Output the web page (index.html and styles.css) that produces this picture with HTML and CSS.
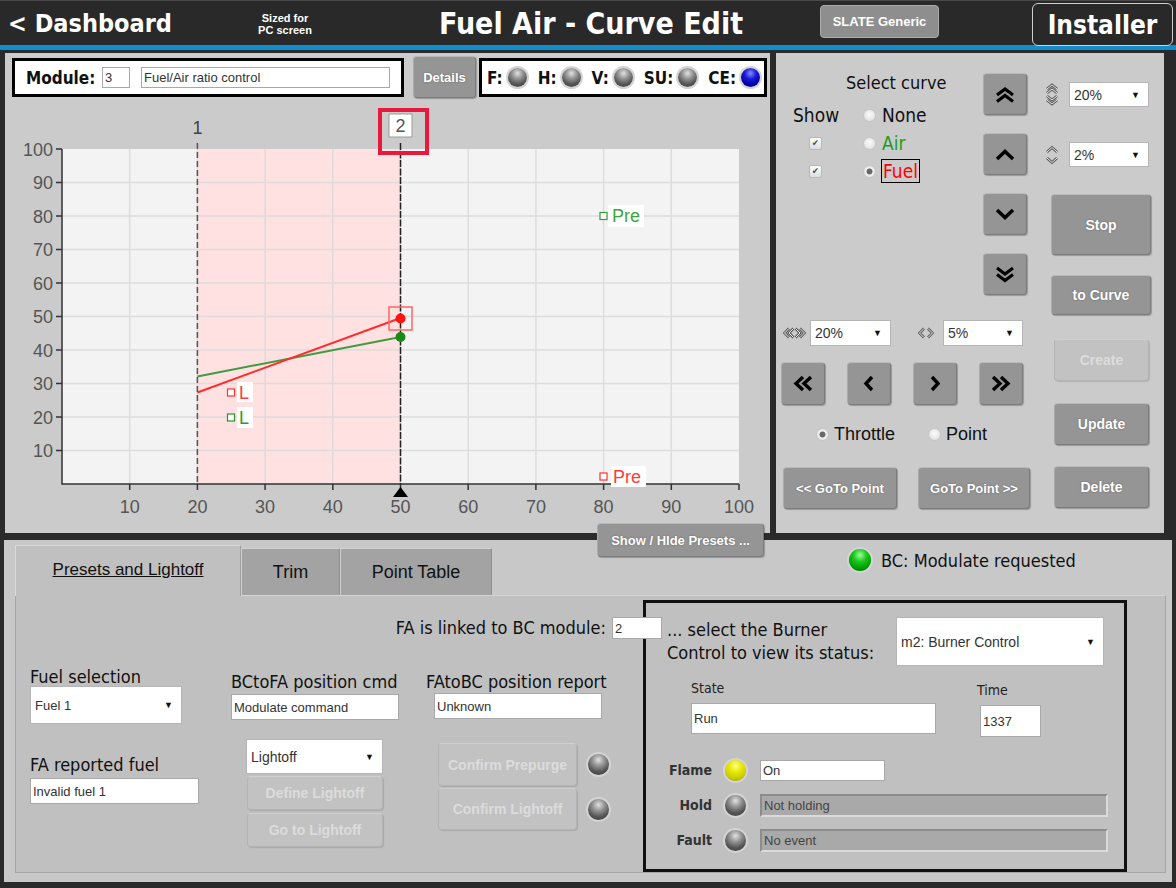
FILE: index.html
```html
<!DOCTYPE html>
<html lang="en">
<head>
<meta charset="utf-8">
<title>Fuel Air - Curve Edit</title>
<link rel="stylesheet" href="styles.css">
</head>
<body>
<header class="topbar">
  <div class="back">&lt; Dashboard</div>
  <div class="sized">Sized for<br>PC screen</div>
  <div></div>
  <h1 class="title">Fuel Air - Curve Edit</h1>
  <div></div>
  <div class="slate">SLATE Generic</div>
  <div></div>
  <div class="installer">Installer</div>
</header>
<div class="blueline"></div>
<main class="main">
  <section class="chart-panel">
    <div class="module-row">
      <div class="module-box">
        <span class="mod-label">Module:</span>
        <span class="inp mod-num">3</span>
        <span class="inp mod-name">Fuel/Air ratio control</span>
      </div>
      <div class="btn details">Details</div>
      <div class="status-box">
        <span class="st-group"><span class="st-label">F:</span><span class="led"></span></span>
        <span class="st-group"><span class="st-label">H:</span><span class="led"></span></span>
        <span class="st-group"><span class="st-label">V:</span><span class="led"></span></span>
        <span class="st-group"><span class="st-label">SU:</span><span class="led"></span></span>
        <span class="st-group"><span class="st-label">CE:</span><span class="led blue"></span></span>
      </div>
    </div>
    <svg class="chart" width="765" height="433" viewBox="5 100 765 433" xmlns="http://www.w3.org/2000/svg">
      <rect x="62" y="149" width="677" height="335" fill="#f3f3f3"/>
      <rect x="197.4" y="149" width="203.1" height="335" fill="#ffe1e1"/>
      <g stroke="#dadada" stroke-width="1.5" opacity="0.85">
        <path d="M129.7 149V484M197.4 149V484M265.1 149V484M332.8 149V484M400.5 149V484M468.2 149V484M535.9 149V484M603.6 149V484M671.3 149V484"/>
        <path d="M62 450.5H739M62 417H739M62 383.5H739M62 350H739M62 316.5H739M62 283H739M62 249.5H739M62 216H739M62 182.5H739"/>
      </g>
      <g stroke="#333" stroke-width="1.5" fill="none">
        <path d="M62 149V484H739"/>
        <path d="M56 149H62M56 182.5H62M56 216H62M56 249.5H62M56 283H62M56 316.5H62M56 350H62M56 383.5H62M56 417H62M56 450.5H62"/>
        <path d="M129.7 484V490M197.4 484V490M265.1 484V490M332.8 484V490M400.5 484V490M468.2 484V490M535.9 484V490M603.6 484V490M671.3 484V490M739 484V490"/>
      </g>
      <g font-family="Liberation Sans, Arial, sans-serif" font-size="18" fill="#555" text-anchor="end">
        <text x="53" y="155.5">100</text>
        <text x="53" y="189">90</text>
        <text x="53" y="222.5">80</text>
        <text x="53" y="256">70</text>
        <text x="53" y="289.5">60</text>
        <text x="53" y="323">50</text>
        <text x="53" y="356.5">40</text>
        <text x="53" y="390">30</text>
        <text x="53" y="423.5">20</text>
        <text x="53" y="457">10</text>
      </g>
      <g font-family="Liberation Sans, Arial, sans-serif" font-size="18" fill="#555" text-anchor="middle">
        <text x="129.7" y="513">10</text>
        <text x="197.4" y="513">20</text>
        <text x="265.1" y="513">30</text>
        <text x="332.8" y="513">40</text>
        <text x="400.5" y="513">50</text>
        <text x="468.2" y="513">60</text>
        <text x="535.9" y="513">70</text>
        <text x="603.6" y="513">80</text>
        <text x="671.3" y="513">90</text>
        <text x="739" y="513">100</text>
        <text x="197.4" y="134" fill="#444">1</text>
      </g>
      <path d="M197.4 143V484" stroke="#555" stroke-width="1.5" stroke-dasharray="6 3"/>
      <path d="M400.5 143V484" stroke="#222" stroke-width="1.5" stroke-dasharray="7 1.5"/>
      <rect x="389" y="114" width="23" height="23" fill="#fff" stroke="#9a9a9a"/>
      <text x="400.5" y="132" font-family="Liberation Sans, Arial, sans-serif" font-size="18" fill="#555" text-anchor="middle">2</text>
      <rect x="380" y="110" width="47" height="43" fill="none" stroke="#e8193c" stroke-width="4"/>
      <path d="M400.5 487L393 497H408Z" fill="#000"/>
      <path d="M197.4 376.5L400.5 337" stroke="#3f9b3f" stroke-width="2"/>
      <path d="M197.4 392.5L400.5 318" stroke="#ff2b2b" stroke-width="2"/>
      <rect x="389" y="307" width="23" height="23" fill="none" stroke="#ff6464" stroke-width="1.5"/>
      <circle cx="400.5" cy="318.5" r="5" fill="#ff1414"/>
      <circle cx="400.5" cy="337" r="5" fill="#178a17"/>
      <g font-family="Liberation Sans, Arial, sans-serif" font-size="18">
        <rect x="227.5" y="389" width="7" height="7" fill="#fff" stroke="#ff3030" stroke-width="1.2"/>
        <rect x="237" y="382" width="16" height="20" fill="#fff"/>
        <text x="239" y="399" fill="#ff3b3b">L</text>
        <rect x="227.5" y="414" width="7" height="7" fill="#fff" stroke="#2f8f2f" stroke-width="1.2"/>
        <rect x="237" y="407" width="16" height="21" fill="#fff"/>
        <text x="239" y="424" fill="#2f9a2f">L</text>
        <rect x="600" y="212.5" width="7" height="7" fill="#fff" stroke="#3a9a3a" stroke-width="1.2"/>
        <rect x="608" y="205" width="36" height="22" fill="#fff"/>
        <text x="612" y="222" fill="#3aa63a">Pre</text>
        <rect x="600" y="473" width="7" height="7" fill="#fff" stroke="#ff3030" stroke-width="1.2"/>
        <rect x="611" y="466" width="35" height="21" fill="#fff"/>
        <text x="613" y="483" fill="#ff3b3b">Pre</text>
      </g>
    </svg>
    <div class="btn presets">Show / HIde Presets ...</div>
  </section>

  <section class="ctrl-panel">
    <div class="cp-left">
      <div class="cp-top">
        <div class="curve-sel">
          <div class="sel-title">Select curve</div>
          <div class="curve-grid">
            <span class="show-lbl">Show</span>
            <span class="radio-item"><span class="radio"></span><span class="rlabel">None</span></span>
            <span class="cb-cell"><span class="checkbox">✔</span></span>
            <span class="radio-item"><span class="radio"></span><span class="rlabel air">Air</span></span>
            <span class="cb-cell"><span class="checkbox">✔</span></span>
            <span class="radio-item"><span class="radio on"></span><span class="rlabel fuel">Fuel</span></span>
          </div>
        </div>
        <div class="arrows">
          <div class="btn arrow"><svg width="22" height="17" viewBox="0 0 22 17"><path d="M3 9L11 3L19 9M3 15.5L11 9.5L19 15.5" fill="none" stroke="#000" stroke-width="3.2"/></svg></div>
          <div class="btn arrow"><svg width="22" height="13" viewBox="0 0 22 13"><path d="M3 11L11 3.5L19 11" fill="none" stroke="#000" stroke-width="3.5"/></svg></div>
          <div class="btn arrow"><svg width="22" height="13" viewBox="0 0 22 13"><path d="M3 2L11 9.5L19 2" fill="none" stroke="#000" stroke-width="3.5"/></svg></div>
          <div class="btn arrow"><svg width="22" height="17" viewBox="0 0 22 17"><path d="M3 2L11 8L19 2M3 8.5L11 14.5L19 8.5" fill="none" stroke="#000" stroke-width="3.2"/></svg></div>
        </div>
      </div>
      <div class="sel-row">
        <svg class="hicon" width="23" height="12" viewBox="0 0 23 12">
          <path d="M6 1.5L1.5 6L6 10.5M10.5 1.5L6 6L10.5 10.5M12.5 1.5L17 6L12.5 10.5M17 1.5L21.5 6L17 10.5" fill="none" stroke="#555" stroke-width="2.6"/>
          <path d="M6 1.5L1.5 6L6 10.5M10.5 1.5L6 6L10.5 10.5M12.5 1.5L17 6L12.5 10.5M17 1.5L21.5 6L17 10.5" fill="none" stroke="#ececec" stroke-width="1"/>
        </svg>
        <div class="select s81">20%<span class="caret">▼</span></div>
        <svg class="hicon lr1" width="16" height="12" viewBox="0 0 16 12">
          <path d="M6 1.5L1.5 6L6 10.5M10 1.5L14.5 6L10 10.5" fill="none" stroke="#555" stroke-width="2.6"/>
          <path d="M6 1.5L1.5 6L6 10.5M10 1.5L14.5 6L10 10.5" fill="none" stroke="#ececec" stroke-width="1"/>
        </svg>
        <div class="select s80">5%<span class="caret">▼</span></div>
      </div>
      <div class="nav-row">
        <div class="btn nav"><svg width="20" height="17" viewBox="0 0 20 17"><path d="M10 2L3 8.5L10 15M18 2L11 8.5L18 15" fill="none" stroke="#000" stroke-width="3.4"/></svg></div>
        <div class="btn nav"><svg width="12" height="17" viewBox="0 0 12 17"><path d="M9 2L3 8.5L9 15" fill="none" stroke="#000" stroke-width="3.4"/></svg></div>
        <div class="btn nav"><svg width="12" height="17" viewBox="0 0 12 17"><path d="M3 2L9 8.5L3 15" fill="none" stroke="#000" stroke-width="3.4"/></svg></div>
        <div class="btn nav"><svg width="20" height="17" viewBox="0 0 20 17"><path d="M2 2L9 8.5L2 15M10 2L17 8.5L10 15" fill="none" stroke="#000" stroke-width="3.4"/></svg></div>
      </div>
      <div class="mode-row">
        <span class="radio-item"><span class="radio on"></span><span class="mlabel">Throttle</span></span>
        <span class="radio-item point"><span class="radio"></span><span class="mlabel">Point</span></span>
      </div>
      <div class="goto-row">
        <div class="btn goto1">&lt;&lt; GoTo Point</div>
        <div class="btn goto2">GoTo Point &gt;&gt;</div>
      </div>
    </div>
    <div class="cp-right">
      <div class="step-row first">
        <svg class="vicon" width="14" height="23" viewBox="0 0 14 23">
          <path d="M2 6L7 2L12 6M2 10L7 6L12 10M2 13L7 17L12 13M2 17L7 21L12 17" fill="none" stroke="#555" stroke-width="2.6"/>
          <path d="M2 6L7 2L12 6M2 10L7 6L12 10M2 13L7 17L12 13M2 17L7 21L12 17" fill="none" stroke="#ececec" stroke-width="1"/>
        </svg>
        <div class="select s80">20%<span class="caret">▼</span></div>
      </div>
      <div class="step-row second">
        <svg class="vicon" width="14" height="20" viewBox="0 0 14 20">
          <path d="M2 7L7 2.5L12 7M2 13L7 17.5L12 13" fill="none" stroke="#555" stroke-width="2.6"/>
          <path d="M2 7L7 2.5L12 7M2 13L7 17.5L12 13" fill="none" stroke="#ececec" stroke-width="1"/>
        </svg>
        <div class="select s80">2%<span class="caret">▼</span></div>
      </div>
      <div class="btn act stop">Stop</div>
      <div class="btn act tocurve">to Curve</div>
      <div class="btn act2 dis create">Create</div>
      <div class="btn act2 update">Update</div>
      <div class="btn act2 delete">Delete</div>
    </div>
  </section>
</main>

<section class="bottom">
  <div class="tabrow">
    <div class="tab active"><span>Presets and Lightoff</span></div>
    <div class="tab trim">Trim</div>
    <div class="tab ptable">Point Table</div>
    <div class="bc-status"><span class="led green big"></span><span>BC: Modulate requested</span></div>
  </div>
  <div class="tab-content">
    <div class="form">
      <div class="link-row">
        <span class="link-lbl">FA is linked to BC module:</span>
        <span class="inp link-inp">2</span>
      </div>
      <div class="cols">
        <div class="col c1">
          <div class="flbl">Fuel selection</div>
          <div class="select fuelsel">Fuel 1<span class="caret">▼</span></div>
          <div class="flbl rep">FA reported fuel</div>
          <div class="inp repinp">Invalid fuel 1</div>
        </div>
        <div class="col c2">
          <div class="flbl top">BCtoFA position cmd</div>
          <div class="inp posinp">Modulate command</div>
          <div class="select lightsel">Lightoff<span class="caret">▼</span></div>
          <div class="btn dis lbtn define">Define Lightoff</div>
          <div class="btn dis lbtn goto">Go to Lightoff</div>
        </div>
        <div class="col c3">
          <div class="flbl top">FAtoBC position report</div>
          <div class="inp posinp rep2">Unknown</div>
          <div class="confirm-row r1"><div class="btn dis cbtn">Confirm Prepurge</div><span class="led mid"></span></div>
          <div class="confirm-row r2"><div class="btn dis cbtn">Confirm Lightoff</div><span class="led mid"></span></div>
        </div>
      </div>
    </div>
    <div class="bc-box">
      <div class="bc-head">
        <div class="bc-text">... select the Burner<br>Control to view its status:</div>
        <div class="select bcsel">m2: Burner Control<span class="caret">▼</span></div>
      </div>
      <div class="state-row">
        <div class="st-col">
          <div class="slbl">State</div>
          <div class="inp stateinp">Run</div>
        </div>
        <div class="time-col">
          <div class="slbl">Time</div>
          <div class="inp timeinp">1337</div>
        </div>
      </div>
      <div class="ind-rows">
        <div class="ind-row"><span class="ilbl">Flame</span><span class="led yellow mid"></span><span class="inp flameinp">On</span></div>
        <div class="ind-row"><span class="ilbl">Hold</span><span class="led mid"></span><span class="inp dinp">Not holding</span></div>
        <div class="ind-row"><span class="ilbl">Fault</span><span class="led mid"></span><span class="inp dinp">No event</span></div>
      </div>
    </div>
  </div>
</section>
</body>
</html>
```

FILE: styles.css
```css
* { box-sizing: border-box; }
html, body { margin: 0; padding: 0; }
body {
  width: 1176px;
  height: 888px;
  overflow: hidden;
  background: #2a2a2a;
  font-family: "DejaVu Sans Condensed", "DejaVu Sans", sans-serif;
  font-stretch: condensed;
  color: #111;
}

/* ---------- header ---------- */
.topbar {
  display: grid;
  grid-template-columns: 254px 62px 84px 382px 38px 119px 93px 141px;
  height: 45px;
  background: #292929;
  border-top: 1px solid #4a4a4a;
}
.back {
  align-self: center;
  padding-left: 8px;
  color: #fff;
  font-weight: bold;
  font-size: 25px;
  line-height: 30px;
  white-space: nowrap;
}
.sized {
  align-self: center;
  margin-top: 1px;
  color: #fff;
  font-family: "Liberation Sans", Arial, sans-serif;
  font-weight: bold;
  font-size: 11px;
  line-height: 12px;
  text-align: center;
}
.title {
  align-self: center;
  margin: 0;
  color: #fff;
  font-size: 30px;
  font-weight: bold;
  line-height: 36px;
  text-align: center;
  white-space: nowrap;
}
.slate {
  margin-top: 4px;
  height: 33px;
  background: #8e8e8e;
  border: 1px solid #ababab;
  border-radius: 4px;
  color: #fff;
  font-family: "Liberation Sans", Arial, sans-serif;
  font-weight: bold;
  font-size: 13px;
  display: flex;
  align-items: center;
  justify-content: center;
}
.installer {
  margin-top: 2px;
  height: 43px;
  border: 1px solid #d0d0d0;
  border-radius: 6px;
  color: #fff;
  font-size: 26px;
  font-weight: bold;
  display: flex;
  align-items: center;
  justify-content: center;
}
.blueline { height: 5px; background: #0a8fd2; }

/* ---------- generic controls ---------- */
.btn {
  background: #959595;
  border: 1px solid #7c7c7c;
  border-top-color: #b9b9b9;
  border-left-color: #ababab;
  border-radius: 4px;
  box-shadow: 1px 1px 1px rgba(0,0,0,0.25);
  color: #fff;
  font-family: "Liberation Sans", Arial, sans-serif;
  font-weight: bold;
  font-size: 13px;
  display: flex;
  align-items: center;
  justify-content: center;
  text-shadow: 0 0 2px rgba(0,0,0,0.35);
  white-space: nowrap;
}
.btn.dis {
  background: #c2c2c2;
  border-color: #b4b4b4;
  border-top-color: #cfcfcf;
  color: #dcdcdc;
  text-shadow: none;
  box-shadow: 1px 1px 1px rgba(0,0,0,0.12);
}
.inp {
  display: flex;
  align-items: center;
  background: #fff;
  border: 1px solid #a8a8a8;
  padding: 0 2px;
  color: #333;
  font-family: "Liberation Sans", Arial, sans-serif;
  font-size: 13px;
  white-space: nowrap;
}
.select {
  display: flex;
  align-items: center;
  justify-content: space-between;
  background: #fff;
  border: 1px solid #b5b5b5;
  padding: 0 8px 0 4px;
  color: #333;
  font-family: "Liberation Sans", Arial, sans-serif;
  font-size: 13px;
  white-space: nowrap;
}
.caret { font-size: 9px; color: #111; }
.led {
  display: inline-block;
  flex: none;
  width: 19px;
  height: 19px;
  border-radius: 50%;
  background: radial-gradient(circle at 50% 28%, #e2e2e2 0%, #9a9a9a 30%, #555 65%, #3a3a3a 100%);
  box-shadow: 0 0 0 2px #d4d4d4;
}
.led.blue { background: radial-gradient(circle at 50% 28%, #8a8aff 0%, #1a1ad8 35%, #0000a0 70%, #00006a 100%); }
.led.green { background: radial-gradient(circle at 50% 28%, #9dff9d 0%, #18c818 35%, #009a00 70%, #006200 100%); }
.led.yellow { background: radial-gradient(circle at 50% 28%, #ffff90 0%, #e8e800 35%, #c8c800 70%, #8a8a00 100%); }
.led.big { width: 22px; height: 22px; }
.led.mid { width: 21px; height: 21px; }
.radio {
  display: inline-block;
  flex: none;
  width: 13px;
  height: 13px;
  border-radius: 50%;
  border: 1px solid #c6c6c6;
  background: radial-gradient(circle at 50% 40%, #fbfbfb, #dadada);
}
.radio.on { background: radial-gradient(circle, #686868 0, #686868 2.6px, #f2f2f2 3.4px, #d6d6d6 100%); }
.checkbox {
  display: inline-block;
  width: 13px;
  height: 13px;
  border: 1px solid #b8b8b8;
  border-radius: 2px;
  background: linear-gradient(#fbfbfb, #dedede);
  color: #444;
  font-size: 9px;
  line-height: 11px;
  text-align: center;
}

/* ---------- main top ---------- */
.main { display: flex; padding-top: 3px; height: 483px; }
.chart-panel {
  position: relative;
  margin-left: 5px;
  width: 765px;
  height: 480px;
  background: #cbcbcb;
}
.module-row {
  display: flex;
  align-items: flex-start;
  height: 47px;
  padding: 3px 0 0 7px;
}
.module-box {
  margin-top: 2px;
  width: 392px;
  height: 39px;
  background: #fff;
  border: 3px solid #000;
  display: flex;
  align-items: center;
  padding-left: 11px;
}
.mod-label { width: 76px; font-weight: bold; font-size: 17px; }
.mod-num { width: 28px; height: 21px; }
.mod-name { margin-left: 11px; width: 249px; height: 21px; }
.details { margin-left: 9px; width: 63px; height: 42px; }
.status-box {
  margin-left: 3px;
  margin-top: 2px;
  width: 288px;
  height: 39px;
  background: #fff;
  border: 3px solid #000;
  display: flex;
  align-items: center;
  gap: 11px;
  padding-left: 5px;
}
.st-group { display: flex; align-items: center; gap: 5px; }
.st-label { font-weight: bold; font-size: 17px; }
.chart { display: block; }
.presets {
  position: absolute;
  left: 592px;
  top: 470px;
  width: 167px;
  height: 34px;
  z-index: 5;
}

/* ---------- right control panel ---------- */
.ctrl-panel {
  margin-left: 6px;
  width: 388px;
  height: 480px;
  background: #cbcbcb;
  display: flex;
}
.cp-left { width: 262px; }
.cp-top { display: flex; height: 243px; }
.curve-sel { width: 207px; padding-top: 19px; }
.sel-title { margin-left: 70px; font-size: 18px; line-height: 22px; }
.curve-grid {
  margin-top: 7px;
  display: grid;
  grid-template-columns: 87px auto;
  grid-auto-rows: 28px;
  align-items: center;
}
.show-lbl { padding-left: 17px; font-size: 19px; }
.cb-cell { padding-left: 33px; display: flex; align-items: center; }
.radio-item { display: flex; align-items: center; gap: 6px; }
.rlabel { font-size: 19px; line-height: 22px; }
.rlabel.air { color: #1f9a1f; }
.rlabel.fuel { color: #f00; border: 1px solid #000; padding: 0 1px; margin-left: -1px; }
.arrows {
  width: 44px;
  padding-top: 20px;
  display: flex;
  flex-direction: column;
  gap: 18px;
}
.arrow { width: 44px; height: 42px; }
.sel-row {
  margin-top: 24px;
  display: flex;
  align-items: center;
  height: 26px;
  padding-left: 7px;
}
.s81 { margin-left: 4px; width: 81px; height: 26px; font-size: 14px; }
.lr1 { margin-left: 27px; }
.s80 { margin-left: 9px; width: 80px; height: 26px; font-size: 14px; }
.nav-row { margin-top: 16px; display: flex; gap: 22px; padding-left: 5px; }
.nav { width: 44px; height: 43px; }
.mode-row {
  margin-top: 19px;
  height: 20px;
  display: flex;
  align-items: center;
  padding-left: 40px;
}
.mode-row .radio-item { gap: 5px; }
.mlabel { font-family: "Liberation Sans", Arial, sans-serif; font-size: 18px; }
.mode-row .point { margin-left: 33px; }
.goto-row { margin-top: 23px; display: flex; gap: 21px; padding-left: 7px; }
.goto1 { width: 114px; height: 42px; }
.goto2 { width: 112px; height: 42px; }
.cp-right { width: 126px; display: flex; flex-direction: column; }
.step-row { display: flex; align-items: center; height: 25px; padding-left: 7px; }
.step-row.first { margin-top: 29px; }
.step-row.second { margin-top: 35px; }
.step-row .s80 { margin-left: 10px; height: 25px; }
.act { margin-left: 13px; width: 100px; font-size: 14px; }
.stop { margin-top: 27px; height: 61px; }
.tocurve { margin-top: 20px; height: 40px; }
.act2 { margin-left: 16px; width: 95px; height: 42px; font-size: 14px; }
.create { margin-top: 24px; }
.update { margin-top: 22px; }
.delete { margin-top: 21px; }

/* ---------- bottom panel ---------- */
.bottom {
  margin: 7px 0 0 4px;
  width: 1168px;
  height: 342px;
  background: #c8c8c8;
  padding-left: 11px;
}
.tabrow { display: flex; align-items: flex-end; height: 55px; }
.tab {
  height: 47px;
  background: #a3a3a3;
  border: 1px solid #d2d2d2;
  border-right-color: #8e8e8e;
  border-bottom: none;
  font-family: "Liberation Sans", Arial, sans-serif;
  font-size: 18px;
  color: #111;
  display: flex;
  align-items: center;
  justify-content: center;
}
.tab.active {
  position: relative;
  z-index: 1;
  width: 226px;
  height: 51px;
  margin-bottom: -1px;
  background: #c0c0c0;
  border-color: #dadada;
  border-right-color: #a0a0a0;
  font-size: 17px;
}
.tab.active span { text-decoration: underline; margin-top: -2px; }
.tab.trim { width: 99px; }
.tab.ptable { width: 152px; }
.bc-status {
  align-self: flex-start;
  margin-top: 9px;
  margin-left: 357px;
  display: flex;
  align-items: center;
  gap: 10px;
  font-size: 18px;
}
.tab-content {
  width: 1151px;
  height: 278px;
  background: #c0c0c0;
  border: 1px solid #a6a6a6;
  border-top-color: #d6d6d6;
  display: flex;
}
.form { width: 627px; }
.link-row {
  display: flex;
  justify-content: flex-end;
  align-items: center;
  height: 43px;
  padding-top: 21px;
}
.link-lbl { margin-right: 6px; font-size: 18px; line-height: 22px; }
.link-inp { position: relative; z-index: 2; width: 50px; height: 22px; margin-right: -19px; }
.cols { display: flex; align-items: flex-start; }
.flbl { font-size: 18px; line-height: 18px; white-space: nowrap; }
.c1 { margin-left: 14px; width: 170px; }
.c1 .flbl { margin-top: 29px; }
.fuelsel { width: 152px; height: 38px; }
.c1 .flbl.rep { margin-top: 32px; }
.repinp { margin-top: 4px; width: 169px; height: 26px; }
.c2 { margin-left: 31px; width: 180px; }
.flbl.top { margin-top: 34px; }
.posinp { margin-top: 3px; width: 168px; height: 26px; }
.lightsel { margin-top: 19px; margin-left: 15px; width: 137px; height: 35px; font-size: 14px; }
.lbtn { margin-left: 16px; width: 136px; height: 34px; font-size: 14px; }
.define { margin-top: 2px; }
.goto { margin-top: 3px; }
.c3 { margin-left: 15px; width: 210px; }
.rep2 { margin-top: 2px; margin-left: 8px; }
.confirm-row { display: flex; align-items: center; margin-left: 12px; }
.confirm-row.r1 { margin-top: 24px; height: 43px; }
.confirm-row.r2 { margin-top: 2px; height: 42px; }
.cbtn { width: 139px; height: 100%; font-size: 14px; }
.confirm-row .led { margin-left: 11px; }

.bc-box {
  margin-top: 4px;
  width: 484px;
  height: 272px;
  border: 3px solid #111;
}
.bc-head { display: flex; padding: 14px 0 0 21px; }
.bc-text { width: 229px; margin-top: 1px; font-size: 18px; line-height: 23px; white-space: nowrap; }
.bcsel { width: 208px; height: 49px; font-size: 14px; }
.state-row { display: flex; margin-top: 14px; padding-left: 45px; }
.st-col { width: 245px; }
.slbl { font-size: 14px; line-height: 16px; color: #222; }
.stateinp { margin-top: 7px; height: 31px; }
.time-col { margin-left: 41px; margin-top: 2px; }
.timeinp { margin-top: 7px; margin-left: 3px; width: 61px; height: 32px; }
.ind-rows { margin-top: 20px; display: flex; flex-direction: column; gap: 9px; }
.ind-row {
  display: grid;
  grid-template-columns: 66px 48px auto;
  height: 26px;
  align-items: center;
}
.ilbl { text-align: right; font-size: 14px; font-weight: bold; color: #333; }
.ind-row .led { margin-left: 13px; }
.flameinp { width: 125px; height: 21px; }
.dinp {
  width: 348px;
  height: 23px;
  background: #a9a9a9;
  border: 2px solid #8c8c8c;
  border-right-color: #dadada;
  border-bottom-color: #dadada;
  color: #444;
}
```
